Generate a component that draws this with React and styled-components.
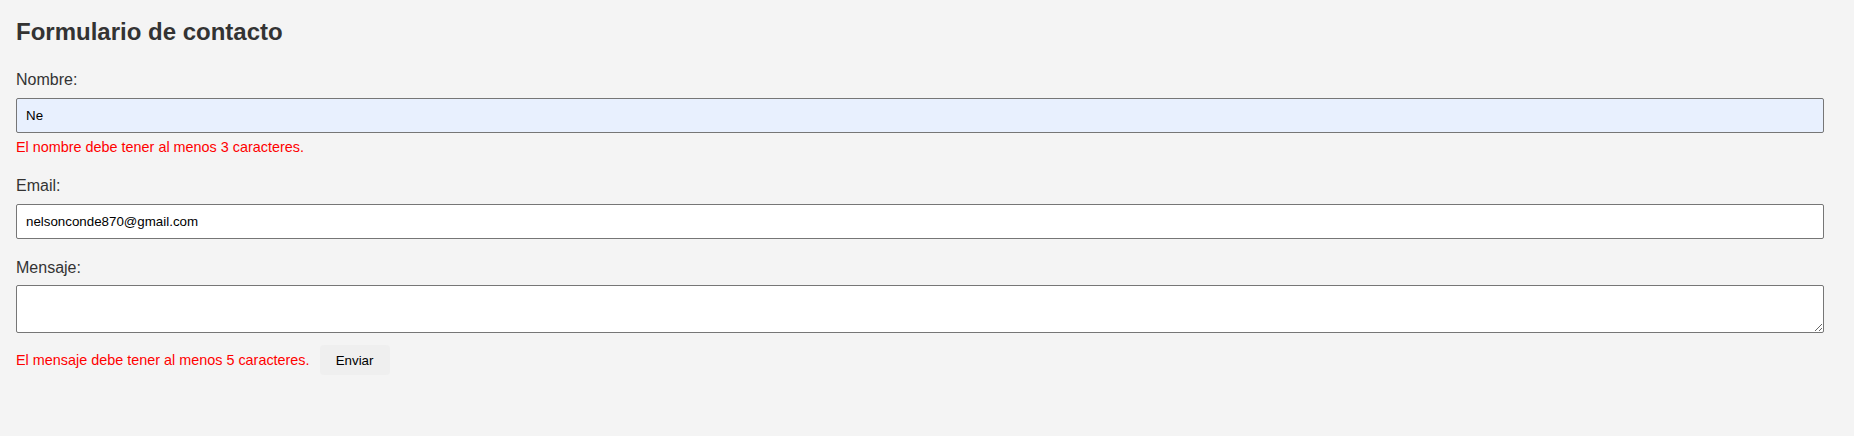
import React from "react";
import styled, { createGlobalStyle } from "styled-components";

const Global = createGlobalStyle`
  html, body {
    margin: 0;
    padding: 0;
    background: #f4f4f4;
  }
  body {
    font-family: "Liberation Sans", Arial, sans-serif;
  }
`;

const Page = styled.div`
  min-height: 436px;
  box-sizing: border-box;
  padding: 18px 30px 0 16px;
  background: #f4f4f4;
  font-family: "Liberation Sans", Arial, sans-serif;
`;

const Title = styled.h2`
  margin: 0 0 25px;
  font-size: 24px;
  font-weight: bold;
  color: #333;
  line-height: normal;
`;

const Form = styled.form`
  display: flex;
  flex-direction: column;
`;

const Group = styled.div`
  display: flex;
  flex-direction: column;
  margin-bottom: ${(p) => p.$mb ?? 20}px;
`;

const Label = styled.label`
  display: block;
  font-size: 16px;
  line-height: normal;
  color: #333;
  margin-bottom: ${(p) => p.$mb ?? 9}px;
`;

const Input = styled.input`
  box-sizing: border-box;
  width: 100%;
  height: 35px;
  padding: 0 9px;
  border: 1px solid #767676;
  border-radius: 2px;
  background: ${(p) => (p.$autofill ? "#e8f0fe" : "#fff")};
  font-family: "Liberation Sans", Arial, sans-serif;
  font-size: 13.333px;
  color: #000;
  outline: none;
`;

const TextArea = styled.textarea`
  box-sizing: border-box;
  width: 100%;
  height: 48px;
  padding: 8px 9px;
  border: 1px solid #767676;
  border-radius: 2px;
  background: #fff;
  font-family: "Liberation Sans", Arial, sans-serif;
  font-size: 13.333px;
  resize: both;
  outline: none;
  display: block;
`;

const Error = styled.span`
  display: block;
  color: #ff0000;
  font-size: 14.4px;
  line-height: normal;
  margin: 6px 0 2px;
`;

const Row = styled.div`
  display: flex;
  align-items: center;
  gap: 10px;
`;

const InlineError = styled.span`
  color: #ff0000;
  font-size: 14.4px;
  line-height: normal;
`;

const Button = styled.button`
  height: 30px;
  width: 70px;
  padding: 0;
  border: none;
  border-radius: 4px;
  background: #efefef;
  color: #000;
  font-family: "Liberation Sans", Arial, sans-serif;
  font-size: 13.333px;
  cursor: pointer;
`;

export default function App() {
  return (
    <>
      <Global />
      <Page>
        <Title>Formulario de contacto</Title>
        <Form onSubmit={(e) => e.preventDefault()}>
          <Group>
            <Label htmlFor="nombre">Nombre:</Label>
            <Input id="nombre" $autofill defaultValue="Ne" />
            <Error>El nombre debe tener al menos 3 caracteres.</Error>
          </Group>
          <Group>
            <Label htmlFor="email">Email:</Label>
            <Input id="email" defaultValue="nelsonconde870@gmail.com" />
          </Group>
          <Group $mb={12}>
            <Label htmlFor="mensaje" $mb={8}>Mensaje:</Label>
            <TextArea id="mensaje" />
          </Group>
          <Row>
            <InlineError>El mensaje debe tener al menos 5 caracteres.</InlineError>
            <Button type="submit">Enviar</Button>
          </Row>
        </Form>
      </Page>
    </>
  );
}
